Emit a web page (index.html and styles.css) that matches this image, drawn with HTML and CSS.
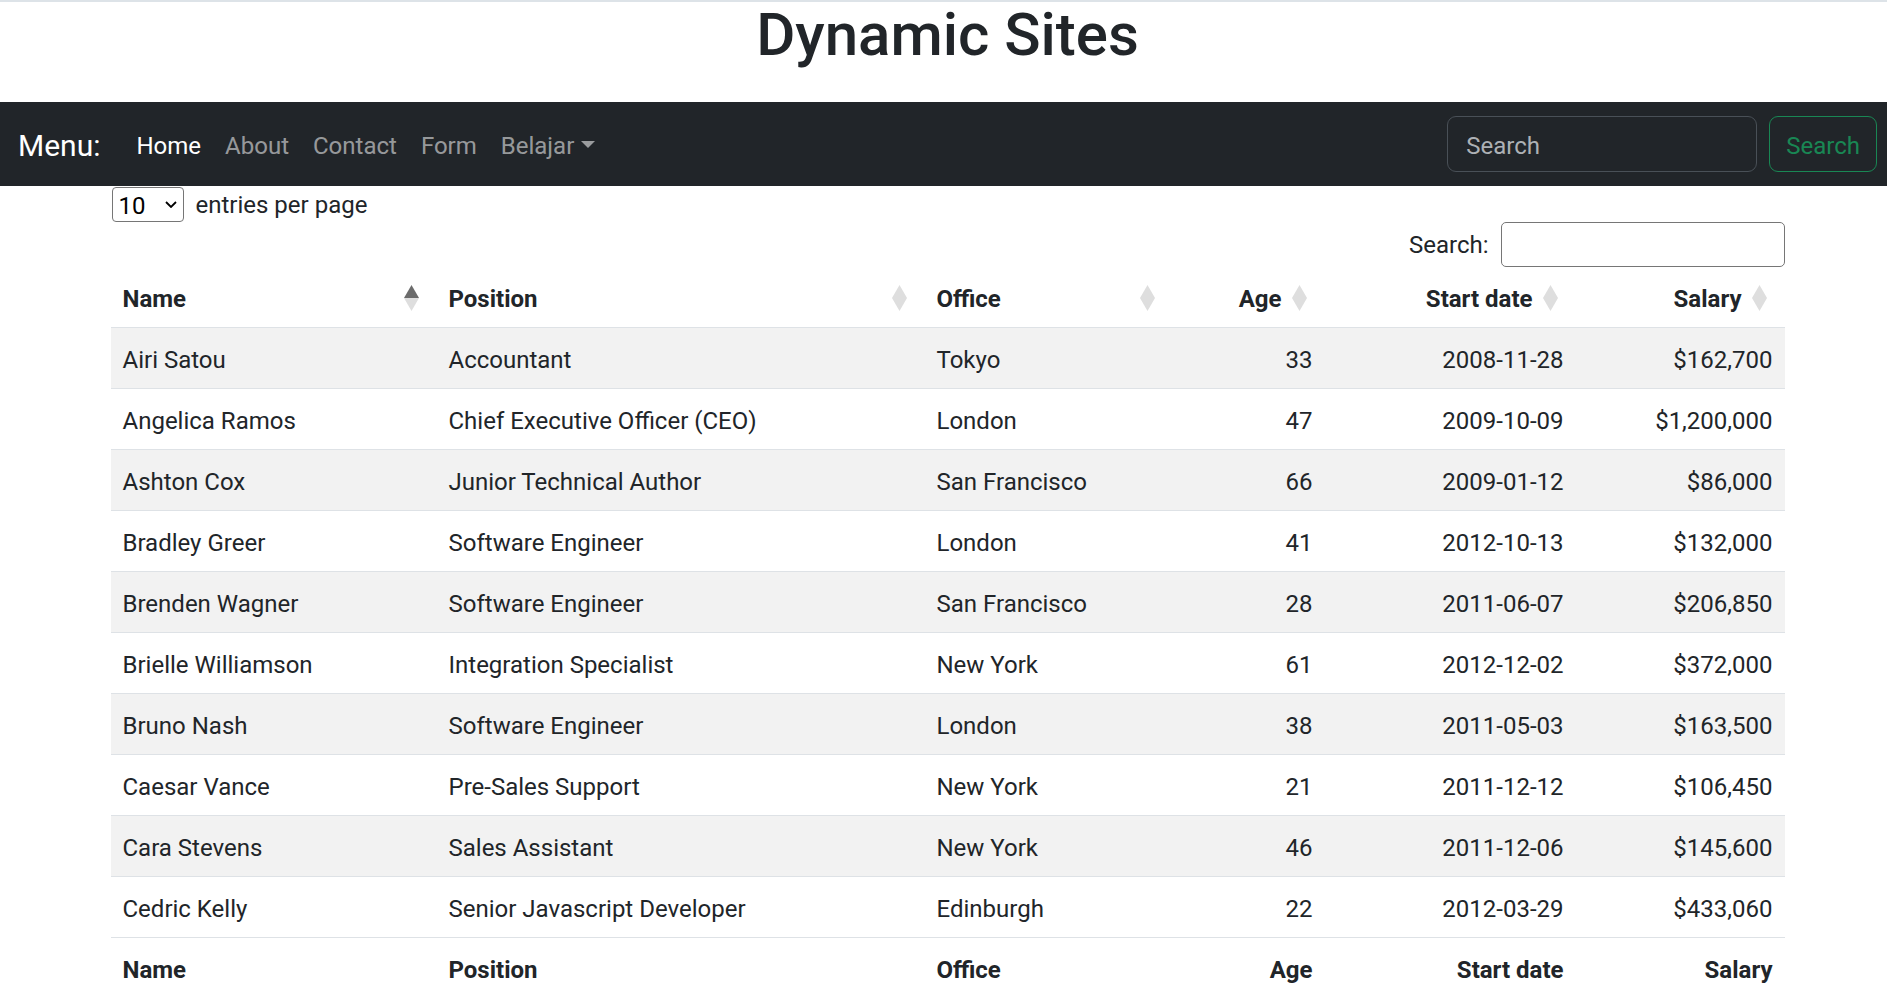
FILE: index.html
```html
<!DOCTYPE html>
<html lang="id">
<head>
<meta charset="utf-8">
<title>Dynamic Sites</title>
<link rel="stylesheet" href="styles.css">
</head>
<body>
<div class="page">
  <header class="site-header">
    <h1 class="site-title">Dynamic Sites</h1>
  </header>

  <nav class="navbar">
    <span class="brand">Menu:</span>
    <ul class="nav">
      <li><a class="nav-link active" href="#">Home</a></li>
      <li><a class="nav-link" href="#">About</a></li>
      <li><a class="nav-link" href="#">Contact</a></li>
      <li><a class="nav-link" href="#">Form</a></li>
      <li><a class="nav-link dropdown-toggle" href="#">Belajar</a></li>
    </ul>
    <form class="nav-search">
      <input class="nav-input" type="search" placeholder="Search">
      <button class="nav-btn" type="button">Search</button>
    </form>
  </nav>

  <main class="container">
    <div class="dt-length">
      <span class="select-wrap">
        <select class="dt-select"><option>10</option></select>
        <svg class="select-chevron" viewBox="0 0 12 7" aria-hidden="true"><path d="M1 1 L6 6 L11 1" fill="none" stroke="#000" stroke-width="1.8"/></svg>
      </span>
      <span class="dt-length-label">entries per page</span>
    </div>
    <div class="dt-search">
      <label class="dt-search-label" for="tsearch">Search:</label>
      <input class="dt-search-input" id="tsearch" type="search">
    </div>

    <table class="dt-table">
      <colgroup>
        <col class="c-name"><col class="c-pos"><col class="c-office"><col class="c-age"><col class="c-date"><col class="c-salary">
      </colgroup>
      <thead>
        <tr>
          <th><div class="th-inner"><span>Name</span><svg class="sort-icon" viewBox="0 0 15 26"><polygon points="7.5,0 15,13 0,13" fill="#6b6b6b"/><polygon points="0,13 15,13 7.5,26" fill="#dedede"/></svg></div></th>
          <th><div class="th-inner"><span>Position</span><svg class="sort-icon" viewBox="0 0 15 26"><polygon points="7.5,0 15,13 0,13" fill="#dedede"/><polygon points="0,13 15,13 7.5,26" fill="#dedede"/></svg></div></th>
          <th><div class="th-inner"><span>Office</span><svg class="sort-icon" viewBox="0 0 15 26"><polygon points="7.5,0 15,13 0,13" fill="#dedede"/><polygon points="0,13 15,13 7.5,26" fill="#dedede"/></svg></div></th>
          <th class="num"><div class="th-inner"><span>Age</span><svg class="sort-icon" viewBox="0 0 15 26"><polygon points="7.5,0 15,13 0,13" fill="#dedede"/><polygon points="0,13 15,13 7.5,26" fill="#dedede"/></svg></div></th>
          <th class="num"><div class="th-inner"><span>Start date</span><svg class="sort-icon" viewBox="0 0 15 26"><polygon points="7.5,0 15,13 0,13" fill="#dedede"/><polygon points="0,13 15,13 7.5,26" fill="#dedede"/></svg></div></th>
          <th class="num"><div class="th-inner"><span>Salary</span><svg class="sort-icon" viewBox="0 0 15 26"><polygon points="7.5,0 15,13 0,13" fill="#dedede"/><polygon points="0,13 15,13 7.5,26" fill="#dedede"/></svg></div></th>
        </tr>
      </thead>
      <tbody>
        <tr><td>Airi Satou</td><td>Accountant</td><td>Tokyo</td><td class="num">33</td><td class="num">2008-11-28</td><td class="num">$162,700</td></tr>
        <tr><td>Angelica Ramos</td><td>Chief Executive Officer (CEO)</td><td>London</td><td class="num">47</td><td class="num">2009-10-09</td><td class="num">$1,200,000</td></tr>
        <tr><td>Ashton Cox</td><td>Junior Technical Author</td><td>San Francisco</td><td class="num">66</td><td class="num">2009-01-12</td><td class="num">$86,000</td></tr>
        <tr><td>Bradley Greer</td><td>Software Engineer</td><td>London</td><td class="num">41</td><td class="num">2012-10-13</td><td class="num">$132,000</td></tr>
        <tr><td>Brenden Wagner</td><td>Software Engineer</td><td>San Francisco</td><td class="num">28</td><td class="num">2011-06-07</td><td class="num">$206,850</td></tr>
        <tr><td>Brielle Williamson</td><td>Integration Specialist</td><td>New York</td><td class="num">61</td><td class="num">2012-12-02</td><td class="num">$372,000</td></tr>
        <tr><td>Bruno Nash</td><td>Software Engineer</td><td>London</td><td class="num">38</td><td class="num">2011-05-03</td><td class="num">$163,500</td></tr>
        <tr><td>Caesar Vance</td><td>Pre-Sales Support</td><td>New York</td><td class="num">21</td><td class="num">2011-12-12</td><td class="num">$106,450</td></tr>
        <tr><td>Cara Stevens</td><td>Sales Assistant</td><td>New York</td><td class="num">46</td><td class="num">2011-12-06</td><td class="num">$145,600</td></tr>
        <tr><td>Cedric Kelly</td><td>Senior Javascript Developer</td><td>Edinburgh</td><td class="num">22</td><td class="num">2012-03-29</td><td class="num">$433,060</td></tr>
      </tbody>
      <tfoot>
        <tr><th>Name</th><th>Position</th><th>Office</th><th class="num">Age</th><th class="num">Start date</th><th class="num">Salary</th></tr>
      </tfoot>
    </table>
  </main>
</div>
</body>
</html>
```

FILE: styles.css
```css
* { box-sizing: border-box; }

html { overflow-x: hidden; }

body {
  margin: 0;
  font-family: Roboto, "Liberation Sans", sans-serif;
  font-size: 24px;
  line-height: 1.5;
  color: #212529;
  background: #fff;
}

.page {
  width: 1895px;
  border-top: 2px solid #dde3e8;
}

/* Title */
.site-header {
  height: 100px;
  text-align: center;
}

.site-title {
  margin: 0;
  font-size: 60px;
  font-weight: 500;
  line-height: 65px;
  color: #212529;
}

/* Navbar */
.navbar {
  display: flex;
  align-items: center;
  height: 84px;
  padding: 0 18px;
  background: #212529;
}

.brand {
  color: #fff;
  font-size: 30px;
  line-height: 45px;
  padding-top: 2px;
  margin-right: 24px;
}

.nav {
  display: flex;
  list-style: none;
  margin: 0;
  padding: 0;
}

.nav-link {
  display: block;
  padding: 4px 12px 0;
  line-height: 36px;
  color: rgba(255, 255, 255, 0.55);
  text-decoration: none;
}

.nav-link.active { color: #fff; }

.dropdown-toggle::after {
  content: "";
  display: inline-block;
  margin-left: 7px;
  vertical-align: 6px;
  border-top: 7px solid;
  border-left: 7px solid transparent;
  border-right: 7px solid transparent;
}

.nav-search {
  display: flex;
  gap: 12px;
  margin: 0 0 0 auto;
}

.nav-input {
  width: 310px;
  height: 56px;
  padding: 3px 18px 0;
  font: inherit;
  color: #dee2e6;
  background: #212529;
  border: 1.5px solid #495057;
  border-radius: 9px;
  outline: none;
}

.nav-input::placeholder { color: #adb1b5; }

.nav-btn {
  height: 56px;
  padding: 3px 16px 0;
  font: inherit;
  color: #198754;
  background: transparent;
  border: 1.5px solid #198754;
  border-radius: 9px;
}

/* DataTable */
.container {
  width: 1674px;
  margin: 0 auto;
}

.dt-length {
  display: flex;
  align-items: center;
  height: 36px;
  padding-top: 1px;
}

.select-wrap {
  position: relative;
  display: inline-block;
  margin-left: 1px;
}

.dt-select {
  appearance: none;
  -webkit-appearance: none;
  display: block;
  width: 72px;
  height: 35px;
  padding: 0 0 0 6px;
  font: inherit;
  color: #000;
  background: #fff;
  border: 1px solid #767676;
  border-radius: 4px;
}

.select-chevron {
  position: absolute;
  right: 7px;
  top: 14px;
  width: 12px;
  height: 7px;
  pointer-events: none;
}

.dt-length-label { margin-left: 12px; }

.dt-search {
  display: flex;
  justify-content: flex-end;
  align-items: center;
  gap: 12px;
  height: 45px;
}

.dt-search-input {
  width: 284px;
  height: 45px;
  padding: 7px;
  font: inherit;
  border: 1px solid #767676;
  border-radius: 5px;
  background: transparent;
}

.dt-table {
  width: 100%;
  border-collapse: collapse;
  table-layout: fixed;
}

.c-name { width: 326px; }
.c-pos { width: 488px; }
.c-office { width: 248px; }
.c-age { width: 152px; }
.c-date { width: 251px; }
.c-salary { width: 209px; }

.dt-table th,
.dt-table td {
  padding: 14px 12px 10px;
  border-bottom: 1px solid #dee2e6;
  text-align: left;
  color: #212529;
  white-space: nowrap;
}

.dt-table th { font-weight: 700; }

.dt-table thead th { padding-right: 18px; }

.dt-table .num { text-align: right; }

.th-inner {
  display: flex;
  align-items: center;
  justify-content: space-between;
}

.num .th-inner {
  justify-content: flex-end;
  gap: 10px;
}

.sort-icon {
  flex: none;
  width: 15px;
  height: 26px;
  margin-bottom: 3px;
}

.dt-table tbody tr:nth-child(odd) { background: #f2f2f2; }

.dt-table tfoot th { border-bottom: none; }
```
